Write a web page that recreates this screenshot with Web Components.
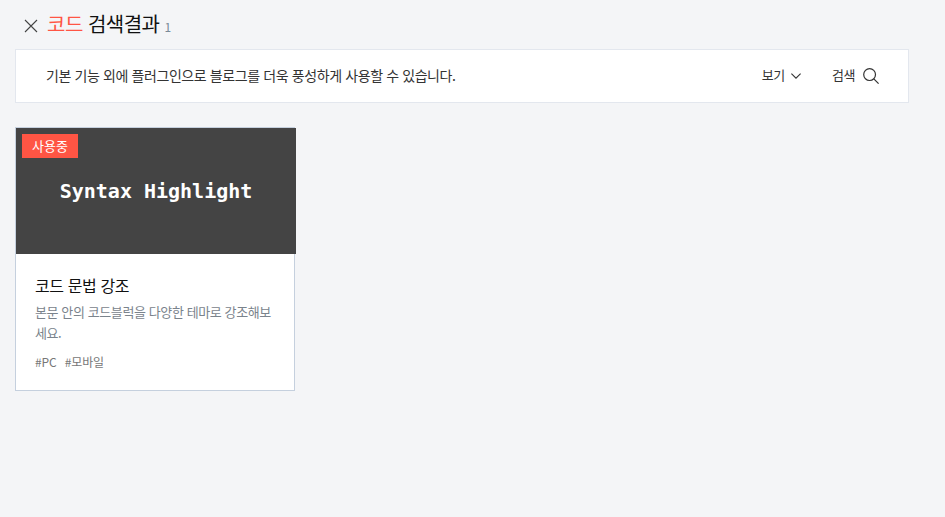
<!DOCTYPE html>
<html lang="ko">
<head>
<meta charset="utf-8">
<title>코드 검색결과</title>
<style>
  html, body { margin: 0; height: 100%; }
  body { background: #f4f5f7; font-family: "Noto Sans CJK KR", "Noto Sans", sans-serif; color: #333; letter-spacing: -0.4px; }
</style>
</head>
<body>
<plugin-page>
  <result-title keyword="코드" count="1"></result-title>
  <search-bar>기본 기능 외에 플러그인으로 블로그를 더욱 풍성하게 사용할 수 있습니다.</search-bar>
  <plugin-card badge="사용중" thumb="Syntax Highlight" name="코드 문법 강조" tags="#PC,#모바일">본문 안의 코드블럭을 다양한 테마로 강조해보세요.</plugin-card>
</plugin-page>
<script>
'use strict';

class PluginPage extends HTMLElement {
  constructor() {
    super();
    this.shadow = this.attachShadow({ mode: 'open' });
    this.shadow.innerHTML = `
<style>
  :host { display: flex; flex-direction: column; align-items: flex-start; padding: 0 36px 0 15px; box-sizing: border-box; width: 945px; }
</style>
<slot></slot>
`;
  }
}

class ResultTitle extends HTMLElement {
  constructor() {
    super();
    this.shadow = this.attachShadow({ mode: 'open' });
    this.shadow.innerHTML = `
<style>
  :host { display: flex; align-items: center; height: 49px; padding: 2px 0 0 9px; box-sizing: border-box; }
  svg { display: block; width: 14px; height: 14px; margin-right: 9px; }
  h1 { margin: 0; font-size: 20px; font-weight: 400; color: #111; line-height: 26px; letter-spacing: -0.5px; }
  em { font-style: normal; color: #ff5544; }
  small { font-size: 12px; color: #7a8a98; margin-left: 5px; }
</style>
<svg viewBox="0 0 14 14" fill="none" stroke="#444" stroke-width="1.1"><path d="M1 1 13 13M13 1 1 13"/></svg>
<h1><em class="keyword"></em> 검색결과<small class="count"></small></h1>
`;
  }
  connectedCallback() {
    this.shadow.querySelector('.keyword').textContent = this.getAttribute('keyword');
    this.shadow.querySelector('.count').textContent = this.getAttribute('count');
  }
}

class SearchBar extends HTMLElement {
  constructor() {
    super();
    this.shadow = this.attachShadow({ mode: 'open' });
    this.shadow.innerHTML = `
<style>
  :host { display: flex; align-items: center; align-self: stretch; height: 54px; box-sizing: border-box; background: #fff; border: 1px solid #e3e7ee; padding: 0 29px 3px 30px; font-size: 14px; color: #333; }
  .info { flex: 1; }
  .action { display: flex; align-items: center; font-size: 13px; color: #333; }
  .view svg { width: 10px; height: 6px; margin-left: 6px; position: relative; top: 1px; }
  .find { margin-left: 31px; }
  .find svg { width: 16px; height: 16px; margin-left: 8px; position: relative; top: 1px; }
  svg { display: block; }
</style>
<span class="info"><slot></slot></span>
<span class="action view">보기<svg viewBox="0 0 10 6" fill="none" stroke="#333" stroke-width="1.1"><path d="M.4.6 5 5.2 9.6.6"/></svg></span>
<span class="action find">검색<svg viewBox="0 0 16 16" fill="none" stroke="#333" stroke-width="1.2"><circle cx="6.6" cy="6.6" r="5.9"/><path d="M10.8 10.8 15.6 15.6"/></svg></span>
`;
  }
}

class PluginCard extends HTMLElement {
  constructor() {
    super();
    this.shadow = this.attachShadow({ mode: 'open' });
    this.shadow.innerHTML = `
<style>
  :host { display: block; width: 280px; height: 264px; box-sizing: border-box; margin-top: 24px; background: #fff; border: 1px solid #c5d0de; }
  .thumb { position: relative; display: flex; align-items: center; justify-content: center; width: 280px; height: 126px; background: #444; color: #fff; font: 700 20px "DejaVu Sans Mono", monospace; letter-spacing: 0; }
  .badge { position: absolute; left: 6px; top: 6px; width: 56px; height: 24px; text-align: center; background: #ff5544; color: #fff; font: 400 13px/23px "Noto Sans CJK KR", sans-serif; letter-spacing: 0; }
  .body { padding: 20px 18px 0 19px; }
  h2 { margin: 0; font-size: 16px; font-weight: 400; color: #111; line-height: 22px; }
  p { margin: 5px 0 0; font-size: 13px; line-height: 21px; color: #7a838c; }
  .tags { display: flex; gap: 8px; margin-top: 10px; font-size: 12px; line-height: 18px; color: #777; letter-spacing: -0.1px; }
</style>
<div class="thumb"><div class="badge"></div><span class="label"></span></div>
<div class="body">
  <h2></h2>
  <p><slot></slot></p>
  <div class="tags"></div>
</div>
`;
  }
  connectedCallback() {
    this.shadow.querySelector('.badge').textContent = this.getAttribute('badge');
    this.shadow.querySelector('.label').textContent = this.getAttribute('thumb');
    this.shadow.querySelector('h2').textContent = this.getAttribute('name');
    const tags = this.shadow.querySelector('.tags');
    tags.innerHTML = '';
    for (const tag of this.getAttribute('tags').split(',')) {
      const span = document.createElement('span');
      span.textContent = tag;
      tags.appendChild(span);
    }
  }
}

customElements.define('plugin-page', PluginPage);
customElements.define('result-title', ResultTitle);
customElements.define('search-bar', SearchBar);
customElements.define('plugin-card', PluginCard);
</script>
</body>
</html>
